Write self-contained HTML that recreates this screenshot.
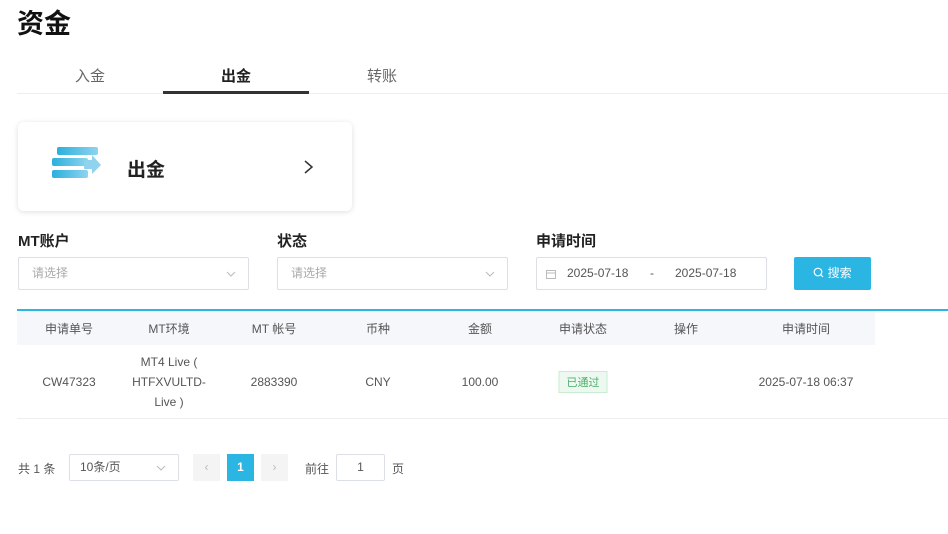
<!DOCTYPE html><html><head><meta charset="utf-8"><style>
body{margin:0;width:948px;height:534px;background:#fff;font-family:"Liberation Sans","Noto Sans CJK SC",sans-serif;position:relative;overflow:hidden;color:#333}
.a{position:absolute}
.c{position:absolute;transform:translateX(-50%);text-align:center;white-space:nowrap}
.in{position:absolute;border:1px solid #dcdfe6;border-radius:2px;height:33px;box-sizing:border-box;font-size:12px;color:#aaa;line-height:31px}
.v{position:absolute;right:12px;top:12px}
</style></head><body>
<div class="a" style="left:17px;top:2px;font-size:27px;font-weight:bold;color:#111">资金</div>
<div class="c" style="left:90px;top:65px;font-size:15px;color:#666">入金</div>
<div class="c" style="left:236px;top:65px;font-size:15px;font-weight:bold;color:#222">出金</div>
<div class="c" style="left:382px;top:65px;font-size:15px;color:#666">转账</div>
<div class="a" style="left:17px;top:93px;width:931px;height:1px;background:#eee"></div>
<div class="a" style="left:163px;top:91px;width:146px;height:3px;background:#333"></div>
<div class="a" style="left:18px;top:122px;width:334px;height:89px;border-radius:6px;box-shadow:0 1px 6px rgba(0,0,0,.13);background:#fff"></div>
<svg class="a" style="left:50px;top:146px" width="54" height="34"><defs><linearGradient id="g"><stop offset="0" stop-color="#2ab0dd"/><stop offset="1" stop-color="#8fd3ef"/></linearGradient></defs><rect x="7" y="1" width="41" height="8" rx="2" fill="url(#g)"/><rect x="2" y="12" width="36" height="8" rx="2" fill="url(#g)"/><rect x="2" y="24" width="36" height="8" rx="2" fill="url(#g)"/><path d="M34 14 L42 14 L42 9 L51 19 L42 28 L42 23 L34 23Z" fill="#8fd3ef"/></svg>
<div class="a" style="left:127px;top:155px;font-size:19px;font-weight:bold;color:#222">出金</div>
<svg class="a" style="left:302px;top:159px" width="12" height="16"><path d="M3 2 L10 8 L3 14" fill="none" stroke="#333" stroke-width="1.5"/></svg>
<div class="a" style="left:18px;top:230px;font-size:15px;font-weight:bold;color:#222">MT账户</div>
<div class="a" style="left:277px;top:230px;font-size:15px;font-weight:bold;color:#222">状态</div>
<div class="a" style="left:536px;top:230px;font-size:15px;font-weight:bold;color:#222">申请时间</div>
<div class="in" style="left:18px;top:257px;width:231px;padding-left:13px">请选择<svg class="v" width="10" height="8"><path d="M1 2 L5 6 L9 2" fill="none" stroke="#bbb"/></svg></div>
<div class="in" style="left:277px;top:257px;width:231px;padding-left:13px">请选择<svg class="v" width="10" height="8"><path d="M1 2 L5 6 L9 2" fill="none" stroke="#bbb"/></svg></div>
<div class="in" style="left:536px;top:257px;width:231px;color:#555"><svg style="position:absolute;left:9px;top:11px" width="10" height="10"><rect x=".5" y="1.5" width="9" height="8" fill="none" stroke="#bbb"/><path d="M1 4h8" stroke="#bbb"/></svg><span style="position:absolute;left:30px">2025-07-18</span><span style="position:absolute;left:113px">-</span><span style="position:absolute;left:138px">2025-07-18</span></div>
<div class="a" style="left:794px;top:257px;width:77px;height:33px;background:#2ab5e3;color:#fff;font-size:12px;text-align:center;line-height:33px;border-radius:2px"><svg width="11" height="11" style="vertical-align:-1px"><circle cx="5" cy="5" r="3.8" fill="none" stroke="#fff" stroke-width="1.2"/><path d="M8 8l2 2" stroke="#fff" stroke-width="1.2"/></svg> 搜索</div>
<div class="a" style="left:17px;top:309px;width:931px;height:2px;background:#2ab5e3"></div>
<div class="a" style="left:17px;top:311px;width:858px;height:34px;background:#f5f7fa"></div>
<div class="a" style="left:17px;top:418px;width:931px;height:1px;background:#eee"></div>
<div style="font-size:12px;color:#555">
<div class="c" style="left:69px;top:320px">申请单号</div><div class="c" style="left:169px;top:320px">MT环境</div><div class="c" style="left:274px;top:320px">MT 帐号</div><div class="c" style="left:378px;top:320px">币种</div><div class="c" style="left:480px;top:320px">金额</div><div class="c" style="left:583px;top:320px">申请状态</div><div class="c" style="left:686px;top:320px">操作</div><div class="c" style="left:806px;top:320px">申请时间</div>
<div class="c" style="left:69px;top:375px">CW47323</div>
<div class="c" style="left:169px;top:352px;line-height:20px">MT4 Live (<br>HTFXVULTD-<br>Live )</div>
<div class="c" style="left:274px;top:375px">2883390</div><div class="c" style="left:378px;top:375px">CNY</div><div class="c" style="left:480px;top:375px">100.00</div>
<div class="c" style="left:583px;top:371px;background:#edf9f0;border:1px solid #c8ecd2;color:#4caf6a;font-size:11px;padding:2px 7px">已通过</div>
<div class="c" style="left:806px;top:375px">2025-07-18 06:37</div>
<div class="a" style="left:18px;top:460px">共 1 条</div>
<div class="in" style="left:69px;top:454px;width:110px;height:27px;line-height:25px;padding-left:10px;color:#555">10条/页<svg class="v" style="top:9px" width="10" height="8"><path d="M1 2 L5 6 L9 2" fill="none" stroke="#bbb"/></svg></div>
<div class="a" style="left:193px;top:454px;width:27px;height:27px;background:#f4f4f5;color:#bbb;text-align:center;line-height:27px">‹</div>
<div class="a" style="left:227px;top:454px;width:27px;height:27px;background:#2ab5e3;color:#fff;text-align:center;line-height:27px;font-weight:bold">1</div>
<div class="a" style="left:261px;top:454px;width:27px;height:27px;background:#f4f4f5;color:#bbb;text-align:center;line-height:27px">›</div>
<div class="a" style="left:305px;top:460px">前往</div>
<div class="in" style="left:336px;top:454px;width:49px;height:27px;line-height:25px;text-align:center;color:#555">1</div>
<div class="a" style="left:392px;top:460px">页</div>
</div>
</body></html>
